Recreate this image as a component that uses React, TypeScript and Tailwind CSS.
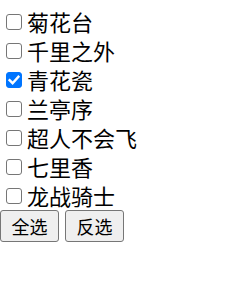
import React, {useState} from 'react';

const SONGS = ['菊花台', '千里之外', '青花瓷', '兰亭序', '超人不会飞', '七里香', '龙战骑士'];

const App = () => {
  const [checked, setChecked] = useState<boolean[]>(SONGS.map(s => s === '青花瓷'));

  const toggle = (index: number) => {
    setChecked(prev => prev.map((c, i) => (i === index ? !c : c)));
  };

  const selectAll = () => setChecked(SONGS.map(() => true));
  const invert = () => setChecked(prev => prev.map(c => !c));

  return (
    <div className="min-h-[285px] w-[241px] bg-white pt-[7px] text-[22px] leading-[29px] text-black [font-family:'Noto_Sans_CJK_SC',sans-serif]">
      {SONGS.map((song, index) => (
        <label key={song} className="flex h-[29px] items-center">
          <span className="relative ml-[6px] mr-[5px] flex h-[16px] w-[16px] shrink-0">
            <input
              type="checkbox"
              checked={checked[index]}
              onChange={() => toggle(index)}
              className="h-[16px] w-[16px] appearance-none rounded-[3px] border-[1.5px] border-[#767676] bg-white checked:border-[#0075ff] checked:bg-[#0075ff]"
            />
            {checked[index] && (
              <svg
                viewBox="0 0 16 16"
                className="pointer-events-none absolute left-0 top-0 h-[16px] w-[16px]"
              >
                <path
                  d="M3.6 8.2 L6.6 11.2 L12.4 4.8"
                  fill="none"
                  stroke="white"
                  strokeWidth="2.4"
                  strokeLinecap="square"
                />
              </svg>
            )}
          </span>
          <span>{song}</span>
        </label>
      ))}
      <div className="flex gap-[6px]">
        <button
          onClick={selectAll}
          className="h-[32px] w-[59px] rounded-[3px] border border-[#767676] bg-[#efefef] text-[18px] leading-none"
        >
          全选
        </button>
        <button
          onClick={invert}
          className="h-[32px] w-[59px] rounded-[3px] border border-[#767676] bg-[#efefef] text-[18px] leading-none"
        >
          反选
        </button>
      </div>
    </div>
  );
};

export default App;
